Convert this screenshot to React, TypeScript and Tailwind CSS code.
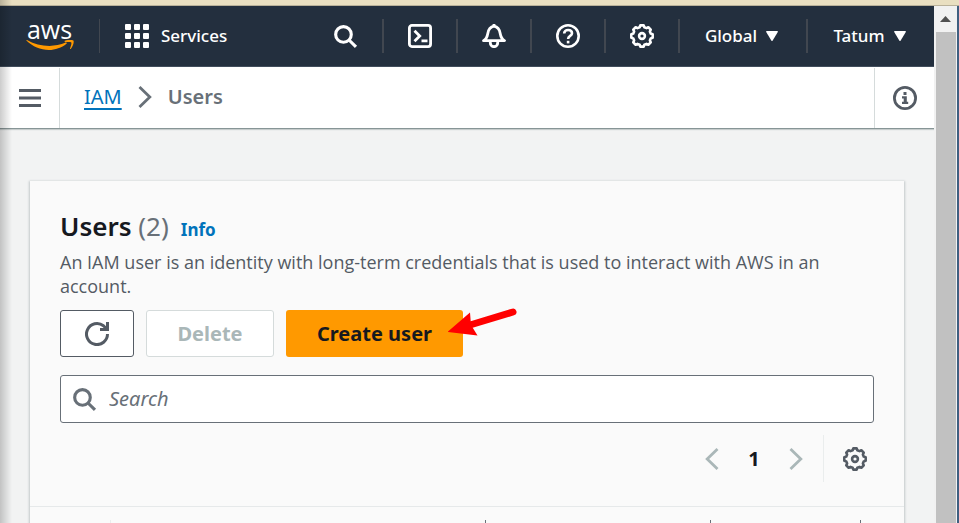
import type { ReactNode } from "react";

const stroke = {
  fill: "none",
  stroke: "currentColor",
  strokeWidth: 2,
} as const;

function AwsLogo() {
  return (
    <span className="flex w-12 flex-col items-center">
      <span className="h-5 font-['Open_Sans',sans-serif] text-[25px] leading-4 font-medium text-white">aws</span>
      <svg className="-mt-px h-[11px] w-12" viewBox="0 0 48 11" aria-hidden="true">
        <path d="M.6.8C.1.2.8-.2 1.400.2c6.500 3.700 14 5.700 22 5.700 5.400 0 11-1.100 16.400-3.300.9-.4 1.500.5.7 1.100C35.600 7.600 29.300 10 22.900 10 14.500 10 6.500 6.500.6.800Z" fill="#f90" />
        <path d="M38.800.8c2.600-1.200 7.700-1.200 8.600-.2.900 1.100-.3 6-2.700 8.300-.5.4-.9.2-.7-.4.700-1.700 1.800-5.100 1.300-5.900-.6-.8-4.300-.6-5.900-.4-.8.1-1.100-.5-.6-1.400Z" fill="#f90" />
      </svg>
    </span>
  );
}

function SearchIcon({ className }: { className: string }) {
  return (
    <svg className={className} viewBox="0 0 16 16" aria-hidden="true">
      <g {...stroke}>
        <circle cx="6.700" cy="6.700" r="5" />
        <path d="m10.400 10.400 4.300 4.300" />
      </g>
    </svg>
  );
}

const gearOutline = Array.from({ length: 8 }, (_, i) => i * 45)
  .flatMap((tooth) => [
    [tooth - 15, 9.1],
    [tooth - 9, 10.8],
    [tooth + 9, 10.8],
    [tooth + 15, 9.1],
  ])
  .map(([deg, r]) => {
    const a = (deg * Math.PI) / 180;
    return `${(12 + r * Math.sin(a)).toFixed(2)},${(12 - r * Math.cos(a)).toFixed(2)}`;
  })
  .join(" ");

function GearIcon({ className }: { className: string }) {
  return (
    <svg className={className} viewBox="0 0 24 24" aria-hidden="true">
      <g {...stroke} strokeWidth={2.600} strokeLinejoin="round">
        <polygon points={gearOutline} />
        <circle cx="12" cy="12" r="2.900" />
      </g>
    </svg>
  );
}

function Chevron({ className, left }: { className: string; left?: boolean }) {
  return (
    <svg className={className} viewBox="0 0 14 24" aria-hidden="true">
      <path {...stroke} strokeWidth={2.800} d={left ? "M12.500 2 2.200 12l10.300 10" : "m1.500 2 10.300 10L1.500 22"} />
    </svg>
  );
}

function NavButton({ label, children }: { label: string; children: ReactNode }) {
  return (
    <button type="button" aria-label={label} className="flex h-[34px] w-[74px] items-center justify-center border-l-2 border-[#414750]">
      {children}
    </button>
  );
}

function NavMenu({ children }: { children: ReactNode }) {
  return (
    <button type="button" className="flex h-[34px] w-32 items-center justify-center gap-[9px] border-l-2 border-[#414750] pr-[3px] text-[17px] font-medium">
      {children}
      <svg className="h-[10px] w-3" viewBox="0 0 12 10" aria-hidden="true">
        <path d="M.8 0h10.400q1.200 0 .6 1L6.700 9.400q-.7 1-1.400 0L.2 1Q-.4 0 .8 0Z" fill="currentColor" />
      </svg>
    </button>
  );
}

function TopNav() {
  return (
    <header className="flex h-[61px] shrink-0 items-center border-b border-[#414d5c] bg-[#232f3e] text-white">
      <a href="#home" aria-label="AWS home" className="flex h-[34px] w-[100px] items-center justify-center border-r border-[#414750]">
        <AwsLogo />
      </a>
      <button type="button" className="ml-[25px] flex items-center gap-3 text-[17px] font-medium">
        <svg className="size-6" viewBox="0 0 24 24" fill="currentColor" aria-hidden="true">
          {[0, 9, 18].map((y) =>
            [0, 9, 18].map((x) => <rect key={`${x}-${y}`} x={x} y={y} width="6" height="6" rx="1" />),
          )}
        </svg>
        Services
      </button>
      <nav aria-label="Account and tools" className="ml-auto flex items-center">
        <button type="button" aria-label="Search" className="flex h-[34px] w-[74px] items-center justify-center">
          <SearchIcon className="size-[25px]" />
        </button>
        <NavButton label="CloudShell">
          <svg className="size-6" viewBox="0 0 24 24" aria-hidden="true">
            <g {...stroke} strokeWidth={2.800}>
              <rect x="1.400" y="1.400" width="21.200" height="21.200" rx="2.500" />
              <path d="m6.500 6.800 5.200 5.200-5.200 5.200M13.500 16.800h6" />
            </g>
          </svg>
        </NavButton>
        <NavButton label="Notifications">
          <svg className="size-6" viewBox="0 0 24 24" aria-hidden="true">
            <g {...stroke} strokeWidth={2.800} strokeLinejoin="round">
              <path d="M1.500 16.700c3.300-1.800 3.800-4.200 4.300-7.200C6.400 5.400 8.500 3 12 2.200c3.500.8 5.600 3.200 6.200 7.300.5 3 1 5.400 4.300 7.200Z" />
              <path d="M12 0v2.500M8.300 17v2a3.700 3.700 0 0 0 7.400 0v-2" />
            </g>
          </svg>
        </NavButton>
        <NavButton label="Help">
          <svg className="size-6" viewBox="0 0 24 24" aria-hidden="true">
            <g {...stroke} strokeWidth={2.600}>
              <circle cx="12" cy="12" r="10.700" />
              <path d="M8.200 9.500c0-2.300 1.600-3.500 3.900-3.500s3.900 1.200 3.900 3.200c0 2.800-3.900 2.600-3.900 5.800" />
              <path d="M12.100 16.800v2.600" />
            </g>
          </svg>
        </NavButton>
        <NavButton label="Settings">
          <GearIcon className="size-6" />
        </NavButton>
        <NavMenu>Global</NavMenu>
        <NavMenu>Tatum</NavMenu>
      </nav>
    </header>
  );
}

function BreadcrumbBar() {
  return (
    <div className="flex h-[62px] shrink-0 items-stretch border-b border-[#879596] bg-white shadow-[0_1px_1px_#c6cccc]">
      <button type="button" aria-label="Open navigation" className="mt-px flex w-[60px] items-center justify-center border-r border-[#d5dbdb] text-[#545b64]">
        <svg className="h-[18px] w-[22px]" viewBox="0 0 22 18" aria-hidden="true">
          <path {...stroke} strokeWidth={2.800} d="M0 1.500h22M0 9h22M0 16.500h22" />
        </svg>
      </button>
      <nav aria-label="Breadcrumb" className="ml-6 flex items-center pb-px text-xl">
        <a href="#iam" className="text-[#0073bb] underline underline-offset-4">IAM</a>
        <Chevron className="mx-4 h-6 w-[14px] text-[#687078]" />
        <span className="font-semibold text-[#687078]">Users</span>
      </nav>
      <button type="button" aria-label="Help panel" className="mt-px ml-auto flex w-[60px] items-center justify-center border-l border-[#d5dbdb] text-[#545b64]">
        <svg className="size-6" viewBox="0 0 24 24" aria-hidden="true">
          <circle {...stroke} strokeWidth={2.800} cx="12" cy="12" r="10.600" />
          <path fill="currentColor" d="M10.500 6h3v3h-3zM9 10.200h4.800v5.600h1.400V18H9v-2.200h1.700v-3.400H9z" />
        </svg>
      </button>
    </div>
  );
}

function Arrow() {
  return (
    <svg className="pointer-events-none absolute top-[-4px] left-[162px] h-8 w-[70px]" viewBox="0 0 70 32" aria-hidden="true">
      <path d="M22 19 65 6" stroke="red" strokeWidth="7" strokeLinecap="round" />
      <path d="M-.5 26 22 6.500 23 19l6.500 10.500Z" fill="red" />
    </svg>
  );
}

const columns = [
  { label: "Select", width: "w-[81px]", edge: "border-[#eaeded]" },
  { label: "User name", width: "w-[375px]", edge: "border-[#687078]" },
  { label: "Path", width: "w-[225px]", edge: "border-[#687078]" },
  { label: "Groups", width: "w-[150px]", edge: "border-[#687078]" },
  { label: "Last activity", width: "w-[150px]", edge: "border-[#687078]" },
];

function UsersCard() {
  return (
    <section className="mx-[30px] mt-[52px] flex-1 overflow-hidden bg-[#fafafa] shadow-[0_1px_2px_1px_#c3c9cb]">
      <div className="px-[30px] pt-[30px] pb-6">
        <div className="flex items-baseline gap-3">
          <h1 className="text-[26px] leading-[30px] font-semibold text-[#16191f]">
            Users <span className="font-normal text-[#687078]">(2)</span>
          </h1>
          <a href="#info" className="text-[17px] leading-5 font-bold text-[#0073bb]">Info</a>
        </div>
        <p className="mt-[9px] font-['Open_Sans',sans-serif] text-[18px] leading-6 text-[#545b64]">
          An IAM user is an identity with long-term credentials that is used to interact with AWS in an account.
        </p>
        <div className="mt-3 flex h-[47px] gap-3 text-xl font-bold">
          <button type="button" aria-label="Refresh" className="flex w-[74px] items-center justify-center rounded-[3px] border border-[#545b64] bg-white text-[#545b64]">
            <svg className="size-6" viewBox="0 0 24 24" aria-hidden="true">
              <g {...stroke} strokeWidth={3}>
                <path d="M22.500 12A10.500 10.500 0 1 1 18.500 3.800l3.500 3.500" />
                <path d="M22.500 0v7.500h-7.500" />
              </g>
            </svg>
          </button>
          <button type="button" disabled className="w-32 rounded-[3px] border border-[#d5dbdb] bg-white text-[#aab7b8]">Delete</button>
          <div className="relative">
            <button type="button" className="h-full w-[177px] rounded-[3px] bg-[#f90] text-[#16191f]">Create user</button>
            <Arrow />
          </div>
        </div>
        <label className="mt-[18px] flex h-12 items-center gap-3 rounded-[3px] border border-[#687078] bg-white pl-[11px] text-[#687078]">
          <SearchIcon className="size-[25px] shrink-0" />
          <input type="search" aria-label="Search users" placeholder="Search" className="min-w-0 flex-1 bg-transparent text-xl outline-none placeholder:text-[#687078] placeholder:italic" />
        </label>
        <div className="mt-3 flex h-[47px] items-center justify-end">
          <button type="button" aria-label="Previous page" disabled className="text-[#aab7b8]">
            <Chevron left className="h-6 w-[14px]" />
          </button>
          <button type="button" aria-current="page" className="w-[70px] text-xl font-bold text-[#16191f]">1</button>
          <button type="button" aria-label="Next page" disabled className="text-[#aab7b8]">
            <Chevron className="h-6 w-[14px]" />
          </button>
          <button type="button" aria-label="Preferences" className="ml-5 flex h-full items-center border-l border-[#eaeded] pr-[7px] pl-[19px] text-[#545b64]">
            <GearIcon className="size-6" />
          </button>
        </div>
      </div>
      <div className="overflow-hidden border-t border-[#e6e9ea]">
        <table className="w-[981px] table-fixed border-collapse">
          <thead>
            <tr>
              {columns.map((c) => (
                <th key={c.label} scope="col" aria-label={c.label} className={`${c.width} p-0 pt-[13px]`}>
                  <div className={`h-6 border-r ${c.edge}`} />
                </th>
              ))}
            </tr>
          </thead>
        </table>
      </div>
    </section>
  );
}

export default function App() {
  return (
    <div className="relative flex h-screen flex-col overflow-hidden bg-[#f2f3f3] font-['Noto_Sans','Open_Sans',sans-serif]">
      <div className="h-[6px] shrink-0 border-b border-[#b9b19a] bg-[#e9dfc1]" />
      <div className="flex min-h-0 flex-1">
        <main className="flex min-w-0 flex-1 flex-col">
          <TopNav />
          <BreadcrumbBar />
          <UsersCard />
        </main>
        <div className="flex w-[25px] shrink-0 flex-col border-r-2 border-[#3f5f80] bg-[#f1f1f1]" aria-hidden="true">
          <div className="flex h-[26px] items-center justify-center">
            <svg className="h-[6px] w-[11px]" viewBox="0 0 11 6">
              <path d="M0 6 5.500 0 11 6Z" fill="#505050" />
            </svg>
          </div>
          <div className="mx-[2px] mr-px flex-1 bg-[#c1c1c1]" />
        </div>
      </div>
      <div className="pointer-events-none absolute inset-y-0 left-0 w-3 bg-linear-to-r from-black/20 to-transparent" />
    </div>
  );
}
